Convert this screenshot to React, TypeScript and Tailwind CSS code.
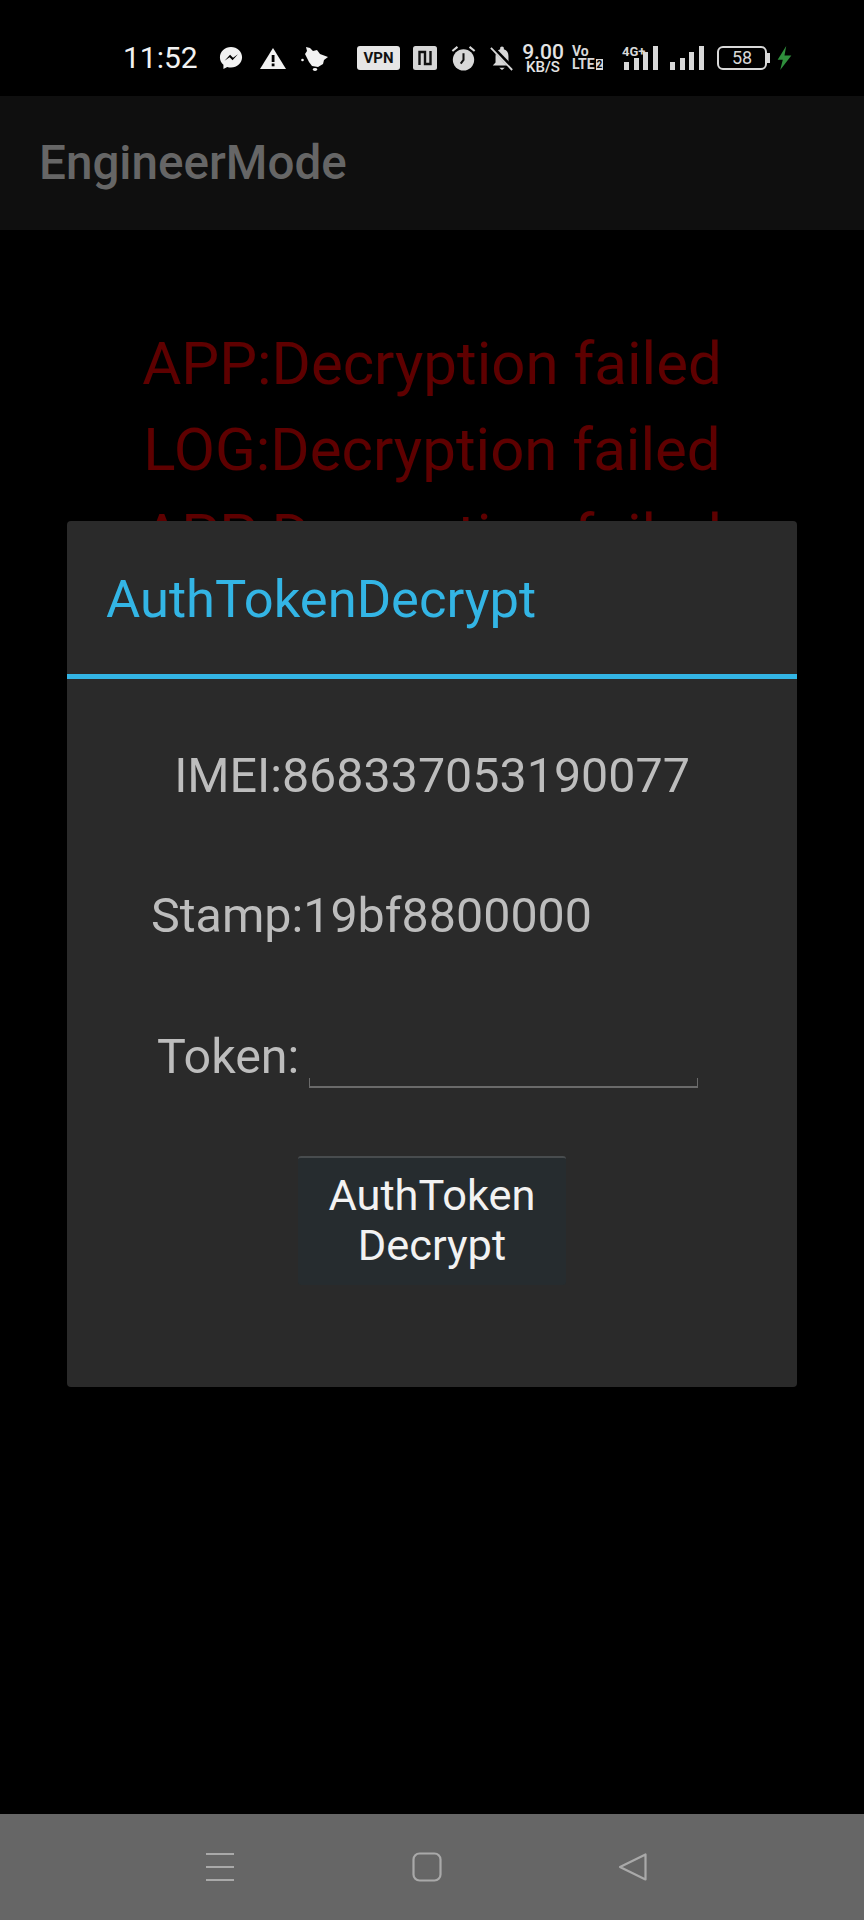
import React from "react";

const Messenger = () => (
  <svg width="24" height="24" viewBox="0 0 26 26" className="block">
    <path d="M13 1C6.400 1 1 5.900 1 12.200c0 3.300 1.400 6.100 3.800 8.100V25l4.100-2.300c1.300.4 2.700.6 4.100.6 6.600 0 12-4.900 12-11.100S19.600 1 13 1z" fill="#f2f2f2" />
    <path d="M6 16l6-6.400 3.200 3.200L20.500 9l-5.800 6.500-3.200-3.200z" fill="#000" />
  </svg>
);
const Warn = () => (
  <svg width="26" height="21" viewBox="0 0 26 21" className="block">
    <path d="M13 0L26 21H0z" fill="#f2f2f2" />
    <rect x="11.700" y="7" width="2.800" height="7" fill="#000" />
    <rect x="11.700" y="15.500" width="2.800" height="2.800" fill="#000" />
  </svg>
);
const Blob = () => (
  <svg width="28" height="25" viewBox="0 0 28 25" className="block">
    <path d="M5 1l4 1 3 3 4-1 3 4 8 3-4 3-1 4-5 3-6-1-3-4-2-4-2-4 2-3z" fill="#f2f2f2" />
    <circle cx="1.500" cy="14" r="1.300" fill="#f2f2f2" />
    <ellipse cx="14" cy="23.500" rx="2.200" ry="1.400" fill="#f2f2f2" />
  </svg>
);
const Nfc = () => (
  <svg width="24" height="24" viewBox="0 0 24 24" className="block">
    <rect width="24" height="24" rx="2.500" fill="#d6d6d6" />
    <path d="M6.500 19V6h5.500v12h5.500V5" fill="none" stroke="#111" strokeWidth="2.400" />
  </svg>
);
const Alarm = () => (
  <svg width="25" height="26" viewBox="0 0 26 28" className="block">
    <circle cx="13" cy="16" r="11.500" fill="#d8d8d8" />
    <path d="M13 9v7l-3 4" fill="none" stroke="#111" strokeWidth="2.200" />
    <path d="M1 6.500L6.500 2M25 6.500L19.500 2" stroke="#d8d8d8" strokeWidth="2.200" />
  </svg>
);
const BellOff = () => (
  <svg width="24" height="26" viewBox="0 0 26 28" className="block">
    <path d="M13 1.500c-1.200 0-2 .8-2 2v1C7.500 5.500 6 8.500 6 12v7l-3 3h20l-3-3v-7c0-3.500-1.500-6.500-5-7.500v-1c0-1.200-.8-2-2-2z" fill="#d8d8d8" />
    <path d="M10 24.500h6l-3 2.500z" fill="#d8d8d8" />
    <path d="M2 2l23 24" stroke="#000" strokeWidth="4.500" />
    <path d="M1 3l23 24" stroke="#d8d8d8" strokeWidth="2" />
  </svg>
);
const Bars = () => (
  <div className="flex h-[24px] w-[34px] items-end justify-between">
    <div className="h-[8px] w-[5px] bg-[#d8d8d8]" />
    <div className="h-[12px] w-[5px] bg-[#d8d8d8]" />
    <div className="h-[18px] w-[5px] bg-[#d8d8d8]" />
    <div className="h-[24px] w-[5px] bg-[#d8d8d8]" />
  </div>
);
const Menu = () => (
  <svg width="28" height="30" viewBox="0 0 28 30" className="block">
    <path d="M0 2h28M0 15h28M0 28h28" stroke="#a9a9a9" strokeWidth="2.200" fill="none" />
  </svg>
);
const Home = () => (
  <svg width="30" height="30" viewBox="0 0 30 30" className="block">
    <rect x="1.500" y="1.500" width="27" height="27" rx="6" fill="none" stroke="#a9a9a9" strokeWidth="2.200" />
  </svg>
);
const Back = () => (
  <svg width="30" height="30" viewBox="0 0 30 30" className="block">
    <path d="M27.500 2.500v25L2 15z" fill="none" stroke="#a9a9a9" strokeWidth="2.200" strokeLinejoin="round" />
  </svg>
);

export default function App() {
  return (
    <div className="relative flex h-[1920px] w-[864px] flex-col overflow-hidden bg-black font-['Roboto',sans-serif]">
      <div className="flex h-[96px] items-center pl-[123px] pt-[20px] text-[#f2f2f2]">
        <span className="w-[96px] text-[30px] leading-none whitespace-nowrap">11:52</span>
        <Messenger />
        <div className="ml-[17px]"><Warn /></div>
        <div className="ml-[15px]"><Blob /></div>
        <div className="ml-[28px] flex h-[24px] w-[43px] items-center justify-center rounded-[3px] bg-[#e6e6e6] text-[15px] font-bold leading-none text-[#111]">VPN</div>
        <div className="ml-[13px]"><Nfc /></div>
        <div className="ml-[14px]"><Alarm /></div>
        <div className="ml-[14px]"><BellOff /></div>
        <div className="ml-[9px] flex w-[40px] flex-col items-center text-[#e4e4e4]">
          <span className="text-[21px] font-medium leading-[16px]">9.00</span>
          <span className="mt-[1px] text-[15px] font-medium leading-[12px]">KB/S</span>
        </div>
        <div className="ml-[9px] flex w-[30px] flex-col text-[14px] font-bold leading-[13px] text-[#d8d8d8]">
          <span>Vo</span>
          <span className="flex items-center">
            LTE
            <span className="ml-[1px] bg-[#d8d8d8] px-[1px] text-[10px] leading-[11px] text-black">2</span>
          </span>
        </div>
        <div className="relative ml-[22px]">
          <span className="absolute -left-[2px] -top-[1px] text-[13px] font-bold leading-none text-[#d8d8d8]">4G+</span>
          <Bars />
        </div>
        <div className="ml-[12px]"><Bars /></div>
        <div className="ml-[13px] flex h-[24px] w-[50px] items-center justify-center rounded-[6px] border-2 border-[#d8d8d8] text-[18px] leading-none text-[#d8d8d8]">58</div>
        <div className="h-[10px] w-[3px] bg-[#d8d8d8]" />
        <svg width="15" height="24" viewBox="0 0 16 28" className="ml-[7px] block">
          <path d="M10 0L0 16h6l-3 12 13-17H8z" fill="#2f8f3c" />
        </svg>
      </div>

      <div className="flex h-[134px] items-center bg-[#0f0f0f] pl-[39px] pt-[2px] text-[47.6px] font-medium leading-none text-[#666666]">
        EngineerMode
      </div>

      <div className="flex flex-1 flex-col items-center pt-[91px] text-[60px] leading-[86px] text-[#5e0000]">
        <p>APP:Decryption failed</p>
        <p>LOG:Decryption failed</p>
        <p>APP:Decryption failed</p>
      </div>

      <div className="flex h-[106px] items-center bg-[#666666] pl-[206px]">
        <Menu />
        <div className="ml-[178px]"><Home /></div>
        <div className="ml-[176px]"><Back /></div>
      </div>

      <div className="absolute left-[67px] top-[521px] flex h-[866px] w-[730px] flex-col rounded-[4px] bg-[#2a2a2a]">
        <div className="flex h-[153px] items-center pl-[39px] pt-[3px] text-[52.5px] leading-none text-[#33b5e5]">AuthTokenDecrypt</div>
        <div className="h-[5px] bg-[#33b5e5]" />
        <div className="flex flex-1 flex-col text-[48.4px] leading-none text-[#bdbdbd]">
          <p className="mt-[73px] text-center">IMEI:868337053190077</p>
          <p className="ml-[84px] mt-[92px]">Stamp:19bf8800000</p>
          <div className="ml-[90px] mt-[92px] flex items-start">
            <span>Token:</span>
            <div className="ml-[10px] mt-[45px] h-[10px] w-[389px] border-x border-b-2 border-[#6a6a6a]" />
          </div>
          <button className="mx-auto mt-[68px] flex h-[129px] w-[268px] items-center justify-center rounded-[3px] border-t-2 border-[#484c4e] bg-[#262c2f] text-center text-[43.4px] leading-[50px] text-[#f2f2f2]">
            AuthToken<br />Decrypt
          </button>
        </div>
      </div>
    </div>
  );
}
